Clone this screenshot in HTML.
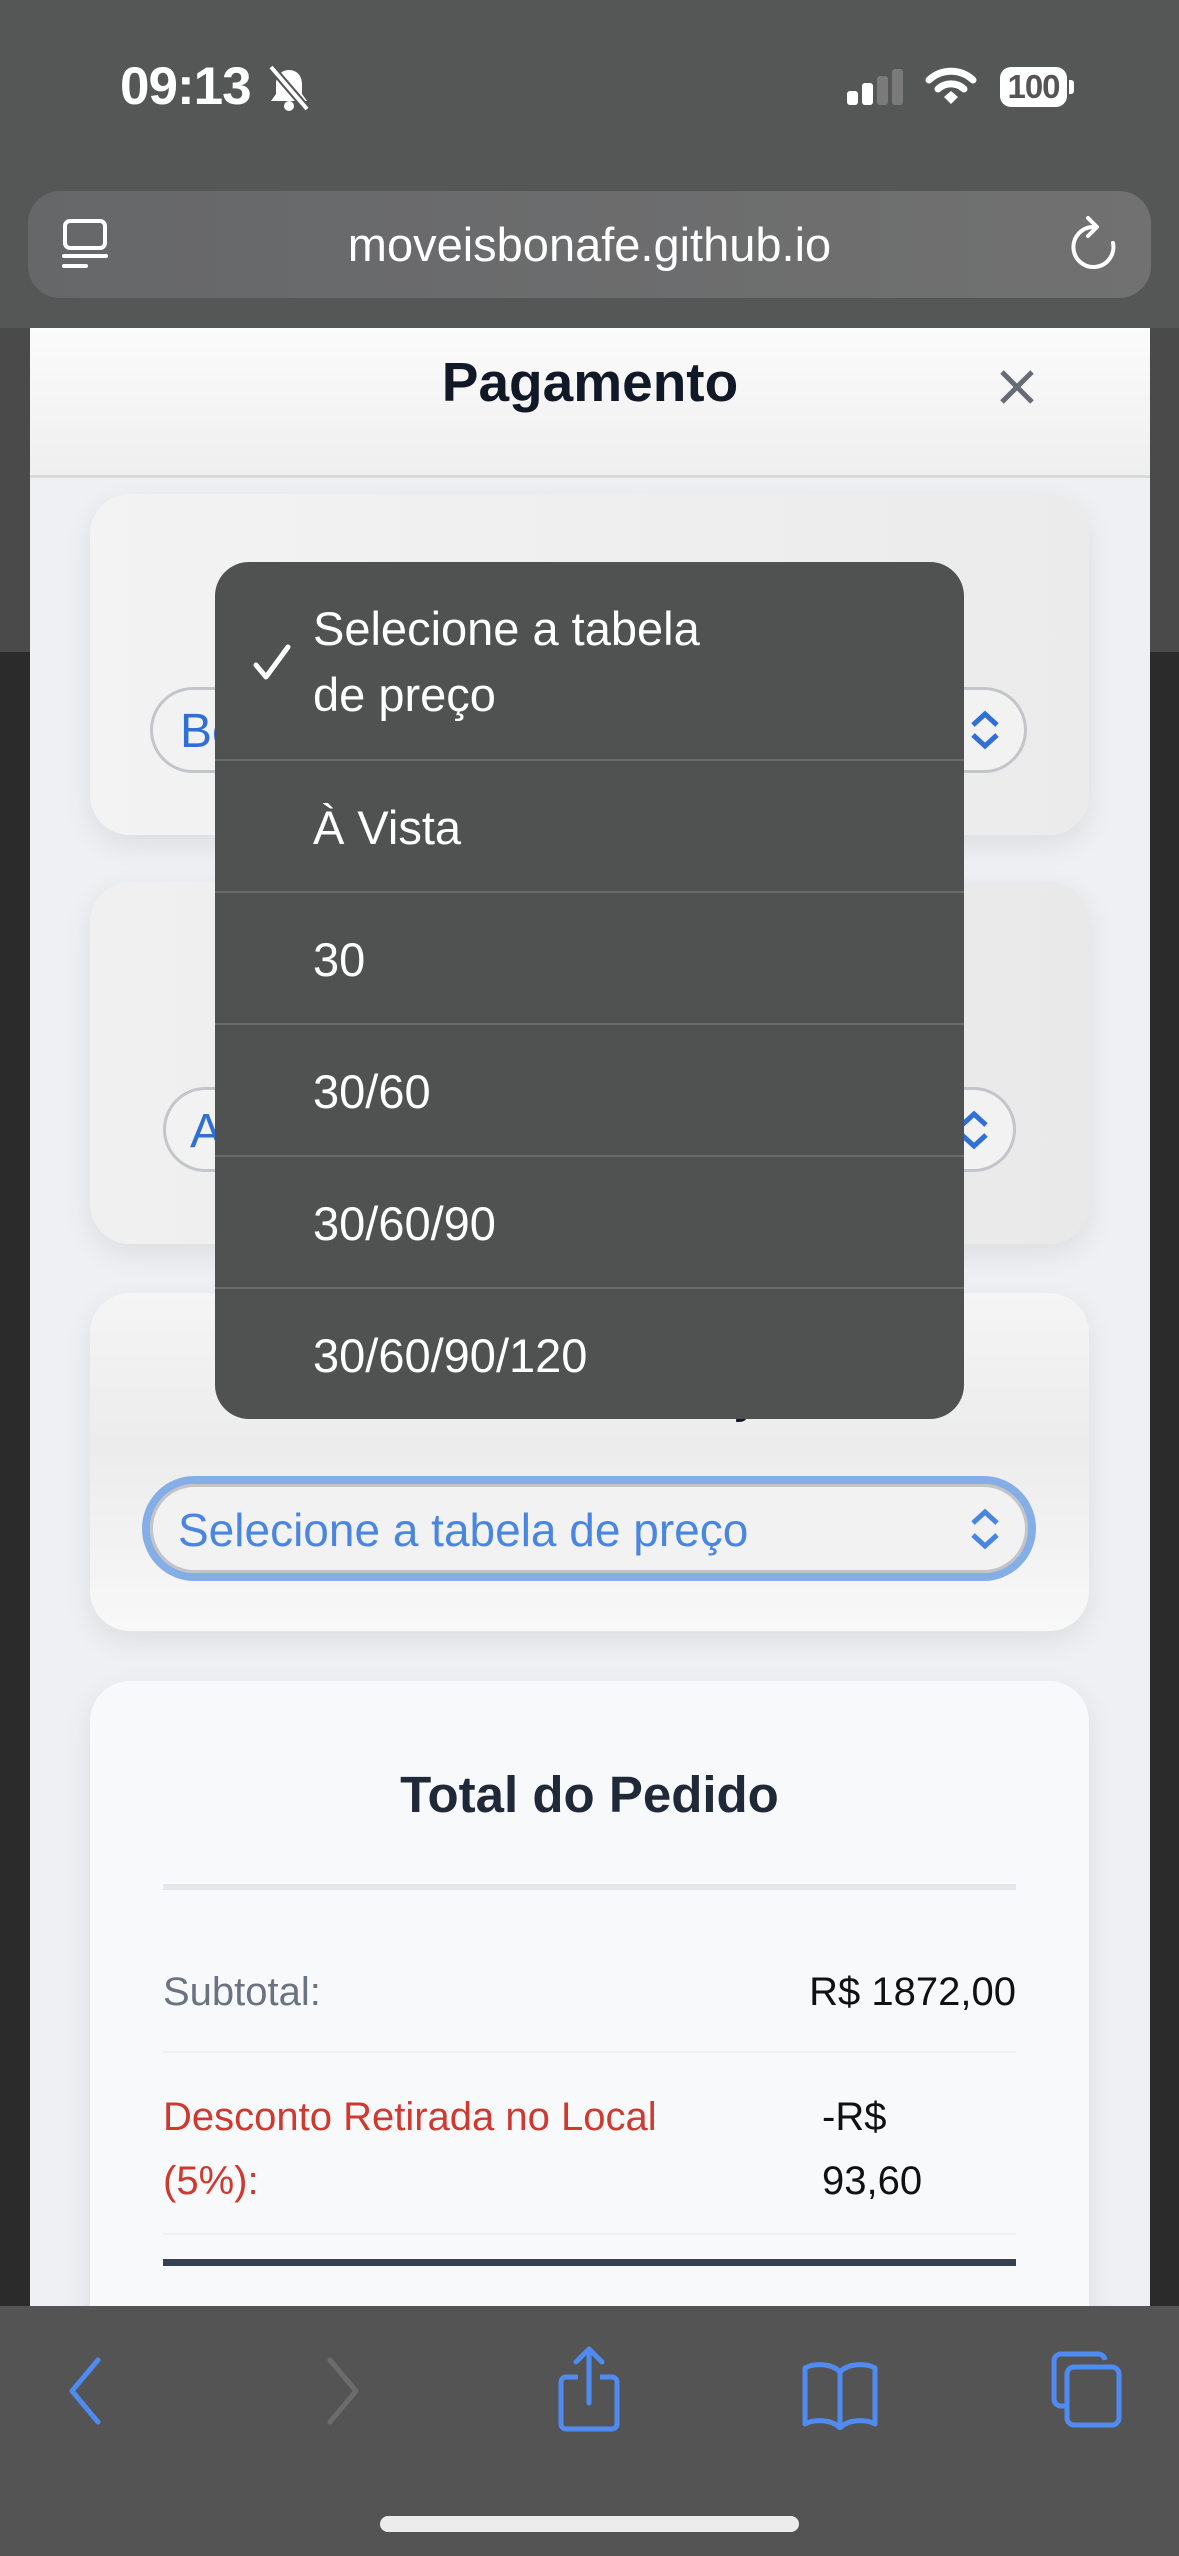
<!DOCTYPE html>
<html><head><meta charset="utf-8"><style>
*{margin:0;padding:0;box-sizing:border-box}
body{width:1179px;height:2556px;overflow:hidden;background:#2b2b2b;font-family:"Liberation Sans",sans-serif;position:relative}
.abs{position:absolute}
.top{left:0;top:0;width:1179px;height:328px;background:#555656}
.url{left:28px;top:191px;width:1123px;height:107px;border-radius:32px;background:linear-gradient(90deg,#666769,#717171)}
.modal{left:30px;top:328px;width:1120px;height:1980px;background:#eef0f3}
.hdr{left:30px;top:328px;width:1120px;height:150px;background:linear-gradient(#fbfbfb,#efefef);border-bottom:3px solid #d9dadc}
.card{border-radius:40px;box-shadow:0 10px 30px rgba(0,0,0,.08)}
.sel{border-radius:60px;border:3px solid #c3c5c9;background:#f2f2f2}
.menu{left:215px;top:562px;width:749px;height:857px;background:#505151;border-radius:34px;overflow:hidden}
.mi{position:absolute;left:98px;color:#fff;font-size:47px}
.sep{position:absolute;left:0;width:749px;height:2px;background:#6a6a6a}
.bar{left:0;top:2306px;width:1179px;height:250px;background:#545454}
</style></head><body>
<div class="abs top"></div>
<div class="abs" style="left:0;top:328px;width:30px;height:324px;background:#4a4a4a"></div>
<div class="abs" style="left:1150px;top:328px;width:29px;height:324px;background:#4a4a4a"></div>
<div class="abs" style="left:120px;top:56px;color:#fff;font-size:53px;font-weight:bold;letter-spacing:-1px">09:13</div>
<svg class="abs" style="left:266px;top:64px" width="46" height="48" viewBox="0 0 46 48"><path d="M23 6c-8 0-13 6-13 14v10l-5 7h36l-5-7V20c0-8-5-14-13-14z" fill="#fff"/><circle cx="23" cy="42" r="5" fill="#fff"/><path d="M5 3l36 42" stroke="#555" stroke-width="8"/><path d="M5 3l36 42" stroke="#fff" stroke-width="4"/></svg>
<div class="abs" style="left:847px;top:91px;width:11px;height:14px;background:#fff;border-radius:3px"></div>
<div class="abs" style="left:862px;top:83px;width:11px;height:22px;background:#fff;border-radius:3px"></div>
<div class="abs" style="left:877px;top:76px;width:11px;height:29px;background:#7a7a7a;border-radius:3px"></div>
<div class="abs" style="left:892px;top:69px;width:11px;height:36px;background:#7a7a7a;border-radius:3px"></div>
<svg class="abs" style="left:925px;top:66px" width="52" height="40" viewBox="0 0 52 40"><path d="M4 14a32 32 0 0 1 44 0" stroke="#fff" stroke-width="7" fill="none" stroke-linecap="round"/><path d="M13 23a19 19 0 0 1 26 0" stroke="#fff" stroke-width="7" fill="none" stroke-linecap="round"/><path d="M19 31l7-6 7 6-7 7z" fill="#fff"/></svg>
<div class="abs" style="left:1000px;top:67px;width:67px;height:40px;background:#fff;border-radius:11px;color:#555;font-weight:bold;font-size:33px;text-align:center;line-height:40px;letter-spacing:-1px">100</div>
<div class="abs" style="left:1069px;top:80px;width:5px;height:14px;background:#fff;border-radius:0 3px 3px 0"></div>
<div class="abs url"></div>
<svg class="abs" style="left:62px;top:218px" width="50" height="52" viewBox="0 0 50 52"><rect x="3" y="3" width="40" height="27" rx="5" stroke="#fff" stroke-width="4" fill="none"/><path d="M2 38h42M2 48h22" stroke="#fff" stroke-width="4" stroke-linecap="round"/></svg>
<div class="abs" style="left:0;width:1179px;top:217px;text-align:center;color:#fff;font-size:47px">moveisbonafe.github.io</div>
<svg class="abs" style="left:1070px;top:213px" width="50" height="60" viewBox="0 0 50 60"><path d="M24 14A20 20 0 1 0 43 30" stroke="#fff" stroke-width="4" fill="none" stroke-linecap="round"/><path d="M18 5l9 9-9 9" stroke="#fff" stroke-width="4" fill="none" stroke-linecap="round" stroke-linejoin="round"/></svg>

<div class="abs modal"></div>
<div class="abs hdr"></div>
<div class="abs" style="left:30px;width:1120px;top:350px;text-align:center;font-size:55px;font-weight:bold;color:#111827">Pagamento</div>
<svg class="abs" style="left:998px;top:368px" width="38" height="38" viewBox="0 0 38 38"><path d="M4 4l30 30M34 4L4 34" stroke="#666b75" stroke-width="5"/></svg>

<div class="abs card" style="left:90px;top:494px;width:999px;height:341px;background:linear-gradient(90deg,#f3f3f3,#ebebeb)"></div>
<div class="abs sel" style="left:150px;top:687px;width:877px;height:86px"></div>
<div class="abs" style="left:180px;top:704px;color:#2f6fd6;font-size:48px">Bo</div>
<svg class="abs" style="left:968px;top:710px" width="34" height="40" viewBox="0 0 34 40"><path d="M5 15L17 4l12 11M5 25l12 11 12-11" stroke="#2f6fd6" stroke-width="5" fill="none"/></svg>

<div class="abs card" style="left:90px;top:882px;width:999px;height:362px;background:linear-gradient(90deg,#f0f0f0,#e9e9e9)"></div>
<div class="abs sel" style="left:163px;top:1087px;width:853px;height:85px"></div>
<div class="abs" style="left:190px;top:1104px;color:#2f6fd6;font-size:48px">A</div>
<svg class="abs" style="left:957px;top:1110px" width="34" height="40" viewBox="0 0 34 40"><path d="M5 15L17 4l12 11M5 25l12 11 12-11" stroke="#2f6fd6" stroke-width="5" fill="none"/></svg>

<div class="abs card" style="left:90px;top:1293px;width:999px;height:338px;background:linear-gradient(#f5f5f5,#ececec 45%,#f8f8f8)"></div>
<div class="abs" style="left:90px;width:999px;top:1364px;text-align:center;font-size:52px;font-weight:bold;color:#111827">Tabela de Preço</div>
<div class="abs" style="left:142px;top:1476px;width:894px;height:105px;border-radius:60px;border:8px solid #86aee6"></div>
<div class="abs sel" style="left:150px;top:1484px;width:878px;height:89px;border-color:#c4c4c6"></div>
<div class="abs" style="left:178px;top:1503px;color:#4a86e0;font-size:46px">Selecione a tabela de preço</div>
<svg class="abs" style="left:968px;top:1508px" width="34" height="42" viewBox="0 0 34 42"><path d="M5 15L17 4l12 11M5 27l12 11 12-11" stroke="#4a86e0" stroke-width="5" fill="none"/></svg>

<div class="abs card" style="left:90px;top:1681px;width:999px;height:700px;background:#f8f9fb"></div>
<div class="abs" style="left:90px;width:999px;top:1765px;text-align:center;font-size:51px;font-weight:bold;color:#1f2937">Total do Pedido</div>
<div class="abs" style="left:163px;top:1884px;width:853px;height:6px;background:#e5e7eb"></div>
<div class="abs" style="left:163px;top:1970px;font-size:40px;color:#6b7280">Subtotal:</div>
<div class="abs" style="left:600px;width:416px;text-align:right;top:1970px;font-size:40px;color:#111">R$ 1872,00</div>
<div class="abs" style="left:163px;top:2051px;width:853px;height:2px;background:#eef0f2"></div>
<div class="abs" style="left:163px;top:2085px;font-size:40px;color:#cf3a30;line-height:64px">Desconto Retirada no Local<br>(5%):</div>
<div class="abs" style="left:822px;top:2085px;font-size:40px;color:#111;line-height:64px">-R$<br>93,60</div>
<div class="abs" style="left:163px;top:2233px;width:853px;height:2px;background:#eef0f2"></div>
<div class="abs" style="left:163px;top:2259px;width:853px;height:7px;background:#374151"></div>

<div class="abs menu">
<svg style="position:absolute;left:38px;top:82px" width="38" height="38" viewBox="0 0 38 38"><path d="M3 21l10 12L35 3" stroke="#fff" stroke-width="5" fill="none" stroke-linecap="round" stroke-linejoin="round"/></svg>
<div class="mi" style="top:34px;line-height:66px">Selecione a tabela<br>de preço</div>
<div class="sep" style="top:197px"></div>
<div class="mi" style="top:238px">À Vista</div>
<div class="sep" style="top:329px"></div>
<div class="mi" style="top:370px">30</div>
<div class="sep" style="top:461px"></div>
<div class="mi" style="top:502px">30/60</div>
<div class="sep" style="top:593px"></div>
<div class="mi" style="top:634px">30/60/90</div>
<div class="sep" style="top:725px"></div>
<div class="mi" style="top:766px">30/60/90/120</div>
</div>

<div class="abs bar"></div>
<svg class="abs" style="left:66px;top:2356px" width="40" height="70" viewBox="0 0 40 70"><path d="M32 4L6 35l26 31" stroke="#4f8bf0" stroke-width="5" fill="none" stroke-linecap="round" stroke-linejoin="round"/></svg>
<svg class="abs" style="left:322px;top:2356px" width="40" height="70" viewBox="0 0 40 70"><path d="M8 4l26 31L8 66" stroke="#6c6c6c" stroke-width="5" fill="none" stroke-linecap="round" stroke-linejoin="round"/></svg>
<svg class="abs" style="left:556px;top:2345px" width="66" height="90" viewBox="0 0 66 90"><path d="M22 32H10a5 5 0 0 0-5 5v42a5 5 0 0 0 5 5h46a5 5 0 0 0 5-5V37a5 5 0 0 0-5-5H44" stroke="#4f8bf0" stroke-width="5" fill="none"/><path d="M33 58V4M20 17L33 4l13 13" stroke="#4f8bf0" stroke-width="5" fill="none" stroke-linecap="round" stroke-linejoin="round"/></svg>
<svg class="abs" style="left:800px;top:2360px" width="80" height="70" viewBox="0 0 80 70"><path d="M40 12C32 3 14 3 5 8v56c9-5 27-5 35 4 8-9 26-9 35-4V8C66 3 48 3 40 12zM40 12v56" stroke="#4f8bf0" stroke-width="5" fill="none" stroke-linejoin="round"/></svg>
<svg class="abs" style="left:1050px;top:2350px" width="74" height="80" viewBox="0 0 74 80"><path d="M55 10a7 7 0 0 0-7-6H11a7 7 0 0 0-7 7v38a7 7 0 0 0 7 7h4" stroke="#4f8bf0" stroke-width="5" fill="none"/><rect x="17" y="17" width="52" height="58" rx="7" stroke="#4f8bf0" stroke-width="5" fill="none"/></svg>
<div class="abs" style="left:380px;top:2516px;width:419px;height:16px;border-radius:8px;background:#ececec"></div>
</body></html>
